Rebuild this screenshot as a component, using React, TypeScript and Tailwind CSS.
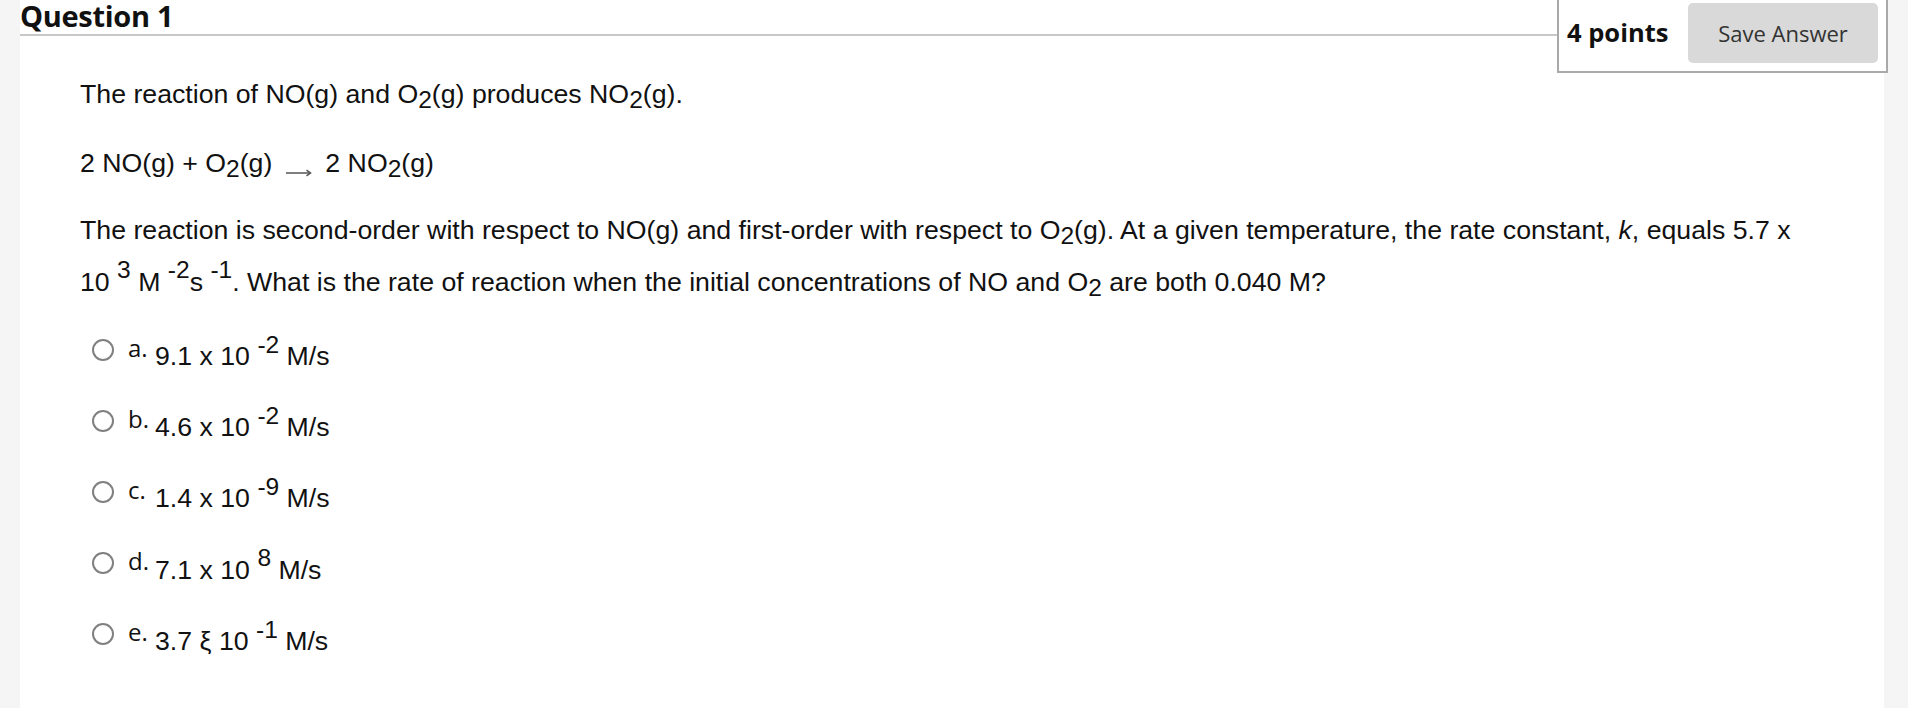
import React from "react";

const arial = "font-['Liberation_Sans',Arial,sans-serif]";
const open = "font-['Open_Sans',sans-serif]";

function Sup({ children }: { children: React.ReactNode }) {
  return <sup className="relative top-[-0.5em] text-[0.92em] leading-[0]">{children}</sup>;
}
function Sub({ children }: { children: React.ReactNode }) {
  return <sub className="relative top-[0.22em] text-[0.92em] leading-[0]">{children}</sub>;
}

function Arrow() {
  return (
    <svg width="27" height="10" viewBox="0 0 27 10" className="inline-block mx-[13px] align-[-6px]">
      <path d="M1 5 H25" stroke="#555" strokeWidth="1.5" fill="none" />
      <path d="M21.5 2.2 L25.5 5 L21.5 7.8" stroke="#555" strokeWidth="1.5" fill="none" />
    </svg>
  );
}

type Opt = { l: string; v: React.ReactNode };

const options: Opt[] = [
  { l: "a.", v: <>9.1 x 10 <Sup>-2</Sup> M/s</> },
  { l: "b.", v: <>4.6 x 10 <Sup>-2</Sup> M/s</> },
  { l: "c.", v: <>1.4 x 10 <Sup>-9</Sup> M/s</> },
  { l: "d.", v: <>7.1 x 10 <Sup>8</Sup> M/s</> },
  { l: "e.", v: <>3.7 ξ 10 <Sup>-1</Sup> M/s</> },
];

export default function App() {
  return (
    <div className="w-[1908px] h-[708px] bg-[#f5f5f5] overflow-hidden">
      <div className="ml-[20px] mr-[24px] h-full bg-white">
        <div className="flex items-start">
          <div className="flex-1 h-[36px] border-b-2 border-[#c8c8c8] pt-[1px]">
            <h2 className={`${open} font-bold text-[29px] leading-[30px] text-[#111] tracking-[-0.3px]`}>Question 1</h2>
          </div>
          <div className="-mr-[4px] w-[331px] h-[73px] border-x-2 border-b-2 border-[#a9a9a9] bg-white px-[8px] pt-[3px] flex items-start justify-between">
            <span className={`${open} font-bold text-[25.5px] leading-[26px] text-[#111] mt-[16px]`}>4 points</span>
            <button className={`${open} w-[190px] h-[60px] rounded-[5px] bg-[#d9d9d9] text-[22px] text-[#333]`}>Save Answer</button>
          </div>
        </div>

        <div className={`${arial} text-[26.7px] text-[#111] pl-[60px] pr-[74px]`}>
          <p className="mt-[3px] leading-[36px]">
            The reaction of NO(g) and O<Sub>2</Sub>(g) produces NO<Sub>2</Sub>(g).
          </p>
          <p className="mt-[33px] leading-[36px]">
            2 NO(g) + O<Sub>2</Sub>(g)<Arrow />2 NO<Sub>2</Sub>(g)
          </p>
          <p className="mt-[24px] leading-[51.5px]">
            The reaction is second-order with respect to NO(g) and first-order with respect to O<Sub>2</Sub>(g). At a given temperature, the rate constant, <i>k</i>, equals 5.7 x 10 <Sup>3</Sup> M <Sup>-2</Sup>s <Sup>-1</Sup>. What is the rate of reaction when the initial concentrations of NO and O<Sub>2</Sub> are both 0.040 M?
          </p>

          <ul className="mt-[6px] flex flex-col">
            {options.map((o) => (
              <li key={o.l} className="h-[71.2px] flex items-center pl-[12px]">
                <span className="w-[22px] h-[22px] rounded-full border-2 border-[#808080] bg-white shrink-0" />
                <span className={`${open} text-[24px] leading-[24px] text-[#111] ml-[14px] w-[27px] relative -top-[2px]`}>{o.l}</span>
                <span className="leading-[27px] whitespace-nowrap relative top-[7px]">{o.v}</span>
              </li>
            ))}
          </ul>
        </div>
      </div>
    </div>
  );
}
